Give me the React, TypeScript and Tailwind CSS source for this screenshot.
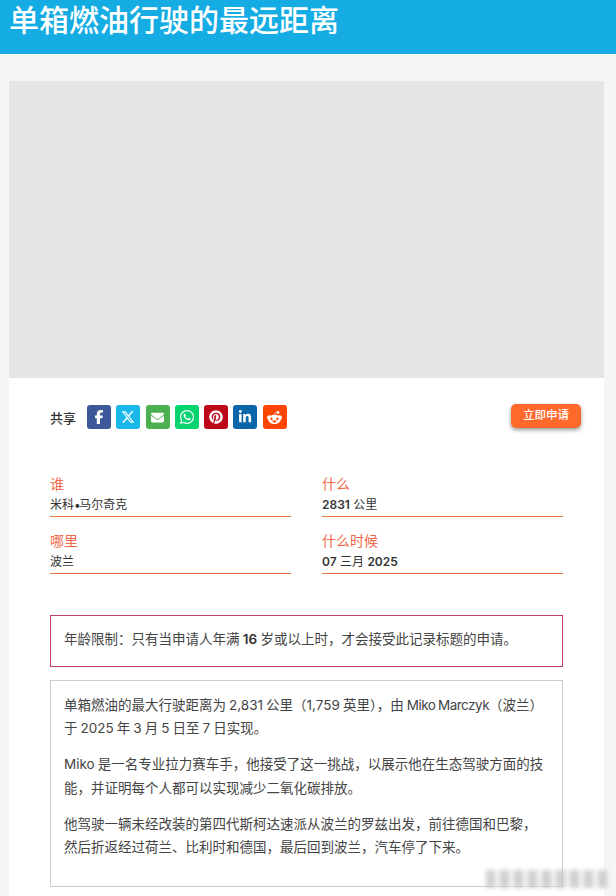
import React from 'react';
import { FaFacebookF, FaXTwitter, FaEnvelope, FaWhatsapp, FaPinterest, FaLinkedinIn, FaRedditAlien } from 'react-icons/fa6';

const shares = [
  { icon: FaFacebookF, bg: 'bg-[#3b5998]', size: 14 },
  { icon: FaXTwitter, bg: 'bg-[#1ab7ea]', size: 14 },
  { icon: FaEnvelope, bg: 'bg-[#4caf50]', size: 13 },
  { icon: FaWhatsapp, bg: 'bg-[#06d46f]', size: 16 },
  { icon: FaPinterest, bg: 'bg-[#bd081c]', size: 14 },
  { icon: FaLinkedinIn, bg: 'bg-[#0a66a8]', size: 14 },
  { icon: FaRedditAlien, bg: 'bg-[#ff4500]', size: 15 },
];

function Field({ label, children }: { label: string; children: React.ReactNode }) {
  return (
    <div className="h-[43px] border-b border-[#e0763f]">
      <div className="text-[14px] leading-[20px] text-[#f0694a]">{label}</div>
      <div className="pt-[1px] text-[12px] leading-[20px] text-[#333]">{children}</div>
    </div>
  );
}

export default function App() {
  return (
    <div className="relative h-[896px] overflow-hidden bg-[#f5f5f5] font-['Inter','Noto_Sans_CJK_SC',sans-serif] text-[#333]">
      <header className="h-[54px] bg-[#14ace3] pl-[9px]">
        <h1 className="text-[30px] leading-[40px] font-medium text-white">单箱燃油行驶的最远距离</h1>
      </header>

      <main className="mx-[9px] mt-[27px] w-[595px]">
        <div className="h-[297px] bg-[#e5e5e5]" />
        <div className="h-[518px] bg-white px-[41px]">
          <div className="flex h-[78px] items-start pt-[26px]">
            <span className="mt-[1px] w-[37px] text-[13px] leading-[26px] font-medium">共享</span>
            <div className="mt-[1px] flex gap-[5.3px]">
              {shares.map(({ icon: Icon, bg, size }, i) => (
                <div key={i} className={`flex h-[24px] w-[24px] items-center justify-center rounded-[3px] text-white ${bg}`}>
                  <Icon size={size} />
                </div>
              ))}
            </div>
            <button className="ml-auto mr-[-18px] h-[24px] w-[70px] rounded-[5px] bg-[#ff6a2c] text-[11.5px] font-medium text-white shadow-[0_2px_4px_rgba(0,0,0,0.4)]">
              立即申请
            </button>
          </div>

          <div className="mt-[17px] grid w-[513px] grid-cols-[241px_241px] gap-x-[31px] gap-y-[14px] pt-[1px]">
            <Field label="谁">米科<span className="tracking-[-2.5px]">•</span><span className="ml-[1px]">马尔奇克</span></Field>
            <Field label="什么"><b className="font-semibold">2831</b> 公里</Field>
            <Field label="哪里">波兰</Field>
            <Field label="什么时候"><b className="font-semibold">07</b> 三月 <b className="font-semibold">2025</b></Field>
          </div>

          <div className="mt-[41px] flex h-[52px] w-[513px] border border-[#c4415f] px-[13px] pt-[12px] text-[13.5px] leading-[22px] text-[#444] [word-spacing:-0.5px]">
            <p>年龄限制：只有当申请人年满 <b className="font-semibold text-[#333]">16</b> 岁或以上时，才会接受此记录标题的申请。</p>
          </div>

          <div className="mt-[13px] h-[207px] w-[513px] border border-[#ccc] px-[13px] pt-[13px] text-[13.5px] leading-[23.4px] text-[#444] [word-spacing:-0.75px]">
            <p>单箱燃油的最大行驶距离为 2,831 公里（1,759 英里），由 <span className="tracking-[-0.5px]">Miko Marczyk</span>（波兰）于 2025 年 3 月 5 日至 7 日实现。</p>
            <p className="mt-[12.6px]">Miko 是一名专业拉力赛车手，他接受了这一挑战，以展示他在生态驾驶方面的技能，并证明每个人都可以实现减少二氧化碳排放。</p>
            <p className="mt-[12.6px]">他驾驶一辆未经改装的第四代斯柯达速派从波兰的罗兹出发，前往德国和巴黎，然后折返经过荷兰、比利时和德国，最后回到波兰，汽车停了下来。</p>
          </div>
        </div>
      </main>

      <div className="absolute left-[486px] top-[870px] h-[18px] w-[122px] bg-[repeating-linear-gradient(90deg,#bdbdbd_0px,#bdbdbd_9px,#efefef_9px,#efefef_14px)] opacity-70 blur-[2px]" />
    </div>
  );
}
